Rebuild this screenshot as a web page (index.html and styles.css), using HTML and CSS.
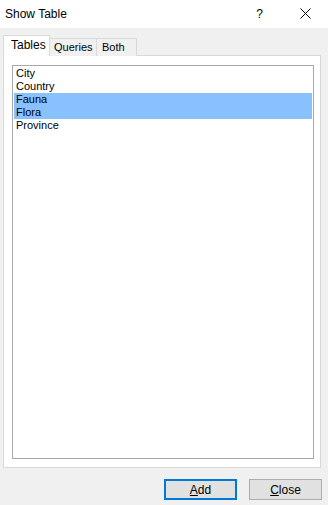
FILE: index.html
```html
<!DOCTYPE html>
<html>
<head>
<meta charset="utf-8">
<link rel="stylesheet" href="styles.css">
</head>
<body>
<div class="dialog">
  <div class="titlebar">
    <span class="title">Show Table</span>
    <span class="help">?</span>
    <svg class="close-x" width="11" height="11" viewBox="0 0 11 11"><path d="M0.5 0.5 L10.5 10.5 M10.5 0.5 L0.5 10.5" stroke="#000" stroke-width="1" fill="none"/></svg>
  </div>
  <div class="body">
    <div class="tabs">
      <div class="tab active">Tables</div>
      <div class="tab">Queries</div>
      <div class="tab">Both</div>
    </div>
    <div class="panel">
      <div class="listbox">
        <div class="item">City</div>
        <div class="item">Country</div>
        <div class="item sel">Fauna</div>
        <div class="item sel">Flora</div>
        <div class="item">Province</div>
      </div>
    </div>
    <div class="buttons">
      <button class="btn default"><u>A</u>dd</button>
      <button class="btn"><u>C</u>lose</button>
    </div>
  </div>
</div>
</body>
</html>
```
FILE: styles.css
```css
html, body {
  margin: 0;
  padding: 0;
}
body {
  width: 328px;
  height: 505px;
  background: #f0f0f0;
  font-family: "Liberation Sans", Arial, sans-serif;
  color: #000;
  overflow: hidden;
}
.dialog {
  display: flex;
  flex-direction: column;
  height: 505px;
}
.titlebar {
  height: 28px;
  background: #fff;
  display: flex;
  align-items: center;
  padding-left: 5px;
  box-sizing: border-box;
}
.title {
  font-size: 12px;
  flex: 1;
  margin-top: -1px;
}
.help {
  font-size: 12px;
  margin-right: 37px;
  margin-top: -1px;
}
.close-x {
  margin-right: 17px;
  margin-top: -1px;
}
.body {
  padding: 7px 7px 0 3px;
  display: flex;
  flex-direction: column;
}
.tabs {
  display: flex;
  align-items: flex-end;
  height: 21px;
  margin-bottom: -1px;
  position: relative;
  z-index: 1;
}
.tab {
  font-size: 11px;
  height: 18px;
  box-sizing: border-box;
  border: 1px solid #d9d9d9;
  border-bottom: none;
  background: #f0f0f0;
  padding: 0 5px;
  line-height: 17px;
  margin-left: -1px;
}
.tab:first-child { margin-left: 0; }
.tab.active {
  height: 21px;
  background: #fff;
  padding: 0 7px;
  line-height: 19px;
  width: 47px;
  font-size: 12px;
  position: relative;
  z-index: 2;
  border-color: #d9d9d9;
}
.tab:nth-child(2) { width: 48px; padding-left: 4px; margin-left: -1px; }
.tab:nth-child(3) { width: 41px; }
.panel {
  height: 413px;
  box-sizing: border-box;
  border: 1px solid #d9d9d9;
  background: #fff;
  padding: 9px 6px 8px 8px;
  display: flex;
}
.listbox {
  flex: 1;
  border: 1px solid #a9a9a9;
  padding: 1px;
  font-size: 11px;
}
.item {
  height: 13px;
  line-height: 13px;
  padding-left: 2px;
}
.item.sel {
  background: #89c1ff;
}
.buttons {
  display: flex;
  justify-content: flex-end;
  gap: 12px;
  margin-top: 11px;
  margin-right: -1px;
}
.btn {
  width: 73px;
  height: 21px;
  box-sizing: border-box;
  border: 1px solid #adadad;
  background: #e1e1e1;
  font-family: "Liberation Sans", Arial, sans-serif;
  font-size: 12px;
  color: #000;
  padding: 0;
  margin: 0;
}
.btn.default {
  border: 2px solid #0078d7;
}
```
